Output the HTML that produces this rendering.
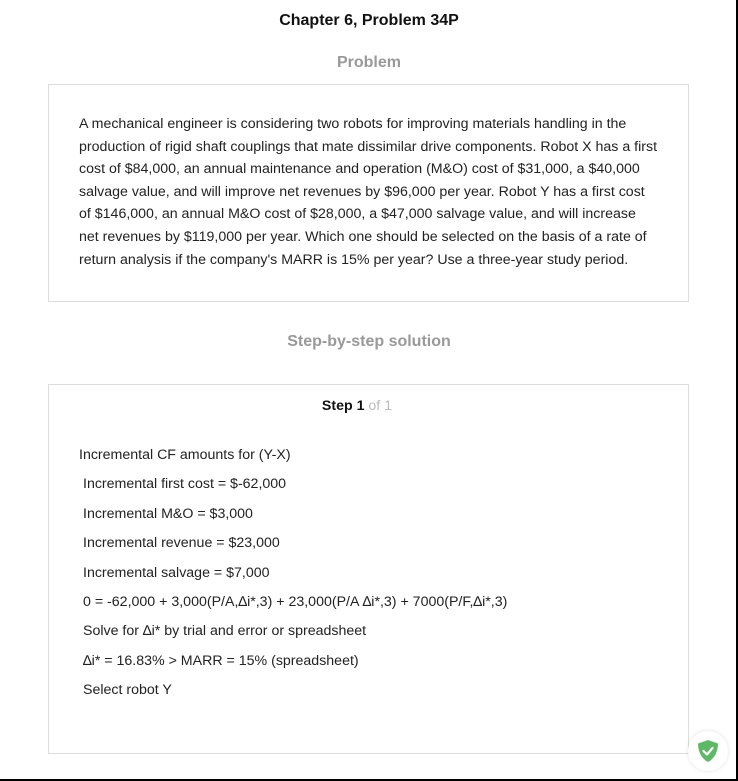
<!DOCTYPE html>
<html><head><meta charset="utf-8"><style>
html,body{margin:0;padding:0;background:#fff;}
body{width:738px;height:781px;position:relative;overflow:hidden;font-family:"Liberation Sans",Arial,sans-serif;color:#222;}
.edge-r{position:absolute;right:0;top:0;width:2px;height:781px;background:#000;}
.edge-b{position:absolute;left:0;bottom:0;width:738px;height:2px;background:#000;}
h1{position:absolute;top:12px;left:0;width:738px;text-align:center;font-size:16px;font-weight:bold;margin:0;color:#111;}
.sec{position:absolute;left:0;width:738px;text-align:center;font-size:16px;font-weight:bold;color:#999;}
.box{position:absolute;left:48px;width:639px;border:1px solid #ddd;}
.p{position:absolute;left:79px;top:113px;width:579.5px;font-size:14.2px;line-height:22.6px;color:#222;}
.l{position:absolute;font-size:14.2px;color:#222;white-space:nowrap;}
</style></head><body>
<h1>Chapter 6, Problem 34P</h1>
<div class="sec" style="top:54px">Problem</div>
<div class="box" style="top:84px;height:216px"></div>
<div class="p">A mechanical engineer is considering two robots for improving materials handling in the production of rigid shaft couplings that mate dissimilar drive components. Robot X has a first cost of $84,000, an annual maintenance and operation (M&amp;O) cost of $31,000, a $40,000 salvage value, and will improve net revenues by $96,000 per year. Robot Y has a first cost of $146,000, an annual M&amp;O cost of $28,000, a $47,000 salvage value, and will increase net revenues by $119,000 per year. Which one should be selected on the basis of a rate of return analysis if the company's MARR is 15% per year? Use a three-year study period.</div>
<div class="sec" style="top:333px">Step-by-step solution</div>
<div class="box" style="top:384px;height:368px"></div>
<div class="l" style="top:398px;left:-12px;width:738px;text-align:center;"><b style="color:#111">Step 1</b> <span style="color:#bbb">of 1</span></div>
<div class="l" style="top:447px;left:79px">Incremental CF amounts for (Y-X)</div>
<div class="l" style="top:476px;left:83px">Incremental first cost = $-62,000</div>
<div class="l" style="top:506px;left:83px">Incremental M&amp;O = $3,000</div>
<div class="l" style="top:535px;left:83px">Incremental revenue = $23,000</div>
<div class="l" style="top:565px;left:83px">Incremental salvage = $7,000</div>
<div class="l" style="top:594px;left:83px">0 = -62,000 + 3,000(P/A,∆i*,3) + 23,000(P/A ∆i*,3) + 7000(P/F,∆i*,3)</div>
<div class="l" style="top:623px;left:83px">Solve for ∆i* by trial and error or spreadsheet</div>
<div class="l" style="top:653px;left:83px">∆i* = 16.83% &gt; MARR = 15% (spreadsheet)</div>
<div class="l" style="top:682px;left:83px">Select robot Y</div>
<div style="position:absolute;left:688px;top:731px;width:40px;height:40px;border-radius:50%;background:#fff;box-shadow:0 0 4px rgba(0,0,0,0.12);"></div>
<svg style="position:absolute;left:697px;top:739px" width="22" height="24" viewBox="0 0 22 24"><path d="M11 1 L21 4.5 C21 13 17 20 11 23 C5 20 1 13 1 4.5 Z" fill="#5fb868"/><path d="M6.5 12 L10 15.5 L15.5 9" stroke="#fff" stroke-width="2.2" fill="none" stroke-linecap="round" stroke-linejoin="round"/></svg>
<div class="edge-r"></div><div class="edge-b"></div>
</body></html>
